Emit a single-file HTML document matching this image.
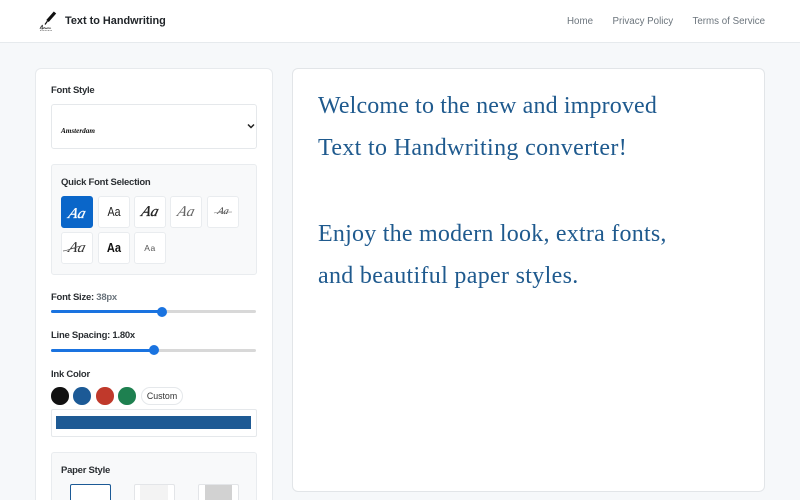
<!DOCTYPE html>
<html lang="en"><head><meta charset="utf-8"><title>Text to Handwriting</title>
<style>
html,body{margin:0;padding:0;width:800px;height:500px;overflow:hidden;background:#f6f8fa}
body{position:relative;font-family:"Liberation Sans",sans-serif;color:#212529}
.a{position:absolute;white-space:nowrap}
.box{position:absolute;box-sizing:border-box}
.lab{position:absolute;white-space:nowrap;font-size:9.5px;letter-spacing:-.25px;font-weight:700;line-height:14px;color:#2b2f33}
.nav{position:absolute;top:15px;white-space:nowrap;font-size:9.75px;line-height:14px;color:#6c757d}
.q{position:absolute;box-sizing:border-box;width:32px;height:32px;background:#fff;border:1px solid #e9ecef;border-radius:3px;text-align:center;overflow:hidden;color:#222}
.q span{position:absolute;left:0;right:0;top:0;line-height:30px}
.q svg{position:absolute;left:0;top:0}
.s{font-family:"Liberation Serif",serif;font-style:italic;font-size:15px;transform:skewX(-14deg)}
.h{font-family:"Liberation Sans",sans-serif}
.track{position:absolute;left:51px;width:205px;height:3px;background:#d8d8d8;border-radius:2px}
.fill{position:absolute;left:51px;height:3px;background:#1a73e0;border-radius:2px}
.th{position:absolute;width:10px;height:10px;border-radius:50%;background:#1a73e0}
.sw{position:absolute;top:387px;width:17.5px;height:17.5px;border-radius:50%}
.line{position:absolute;left:318px;white-space:nowrap;font-family:"Liberation Serif",serif;font-size:24px;line-height:42px;color:#1f5a8e}
</style></head><body>
<div class="box" style="left:0;top:0;width:800px;height:43px;background:#fff;border-bottom:1px solid #e6eaed"></div>
<svg class="a" style="left:38px;top:11px" width="20" height="22" viewBox="0 0 20 22">
<path d="M17 1.500 L9.500 10" stroke="#111" stroke-width="3.200" fill="none"/>
<path d="M9.500 10 L7 13.500" stroke="#111" stroke-width="1.200" fill="none"/>
<path d="M2 18c1-3 2-3 2.500-4c0 3-1 4-.5 4c1 0 2-2 3-1c1 1 2 0 3 0s2 .5 3 0" stroke="#444" stroke-width=".9" fill="none"/>
<path d="M2 19.500H14" stroke="#777" stroke-width=".8" stroke-dasharray="1 .6" fill="none"/>
</svg>
<div class="a" style="left:65px;top:14px;font-size:10.9px;font-weight:700;line-height:14px;color:#212529">Text to Handwriting</div>
<div class="nav" style="left:567px">Home</div>
<div class="nav" style="left:612.500px">Privacy Policy</div>
<div class="nav" style="left:692.500px">Terms of Service</div>

<div class="box" style="left:35px;top:68px;width:238px;height:432px;background:#fff;border:1px solid #e7eaed;border-bottom:none;border-radius:6px 6px 0 0"></div>
<div class="lab" style="left:51px;top:84px">Font Style</div>
<div class="box" style="left:51px;top:104px;width:206px;height:45px;background:#fff;border:1px solid #e5e8eb;border-radius:3px"></div>
<div class="a" style="left:61px;top:125px;font-family:'Liberation Serif',serif;font-style:italic;font-weight:700;font-size:7.200px;line-height:12px;color:#111">Amsterdam</div>
<svg class="a" style="left:247px;top:123px" width="8" height="7" viewBox="0 0 8 7"><path d="M1 1.500L4 4.500L7 1.500" fill="none" stroke="#222" stroke-width="1.500"/></svg>

<div class="box" style="left:51px;top:164px;width:206px;height:111px;background:#f8f9fa;border:1px solid #e9ecef;border-radius:3px"></div>
<div class="lab" style="left:61px;top:176px">Quick Font Selection</div>
<div class="q" style="left:61px;top:196px;background:#0a66c9;border-color:#0a66c9;color:#fff"><span class="s" style="font-size:15px;top:2px;-webkit-text-stroke:.3px #fff">Aa</span></div>
<div class="q" style="left:97.500px;top:196px"><span class="h" style="font-size:12.500px;transform:scaleX(.85)">Aa</span></div>
<div class="q" style="left:134px;top:196px"><span class="s" style="font-size:15px;-webkit-text-stroke:.3px #222">Aa</span></div>
<div class="q" style="left:170px;top:196px;color:#666"><span class="s" style="font-size:15px">Aa</span></div>
<div class="q" style="left:206.500px;top:196px;color:#444"><span class="s" style="font-size:10px">Aa</span><svg width="30" height="30"><path d="M6 16C10 15 18 15 24 15" stroke="#666" stroke-width=".6" fill="none"/></svg></div>
<div class="q" style="left:61px;top:232px;color:#333"><span class="s" style="font-size:15px">Aa</span><svg width="30" height="30"><path d="M1 18C8 17 13 14 19 13" stroke="#555" stroke-width=".7" fill="none"/></svg></div>
<div class="q" style="left:97.500px;top:232px"><span class="h" style="font-size:13px;font-weight:700;color:#111;transform:scaleX(.85)">Aa</span></div>
<div class="q" style="left:134px;top:232px;color:#555"><span class="h" style="font-size:8.500px;letter-spacing:.5px">Aa</span></div>

<div class="lab" style="left:51px;top:291px">Font Size: <span style="color:#6c757d">38px</span></div>
<div class="track" style="top:310px"></div><div class="fill" style="top:310px;width:111px"></div><div class="th" style="left:157px;top:306.500px"></div>
<div class="lab" style="left:51px;top:329px">Line Spacing: 1.80x</div>
<div class="track" style="top:348.500px"></div><div class="fill" style="top:348.500px;width:103px"></div><div class="th" style="left:149px;top:345px"></div>
<div class="lab" style="left:51px;top:368px">Ink Color</div>
<div class="sw" style="left:51px;background:#111"></div>
<div class="sw" style="left:73px;background:#1c5a96"></div>
<div class="sw" style="left:96px;background:#c0392b"></div>
<div class="sw" style="left:118px;background:#1e8050"></div>
<div class="box" style="left:141px;top:387px;width:42px;height:18px;background:#fff;border:1px solid #e5e8eb;border-radius:9px;font-size:8.800px;line-height:16px;text-align:center;color:#333">Custom</div>
<div class="box" style="left:51px;top:409px;width:206px;height:28px;background:#fff;border:1px solid #e5e8eb;border-radius:2px"></div>
<div class="box" style="left:56px;top:416px;width:195px;height:13px;background:#1e5a94"></div>
<div class="box" style="left:51px;top:452px;width:206px;height:48px;background:#f8f9fa;border:1px solid #e9ecef;border-bottom:none;border-radius:3px 3px 0 0"></div>
<div class="lab" style="left:61px;top:464px">Paper Style</div>
<div class="box" style="left:69.500px;top:484px;width:41px;height:16px;background:#fff;border:1.500px solid #1c5a96;border-bottom:none;border-radius:2px 2px 0 0"></div>
<div class="box" style="left:133.500px;top:484px;width:41px;height:16px;background:#fff;border:1px solid #e3e5e8;border-bottom:none;border-radius:2px 2px 0 0"></div>
<div class="box" style="left:140px;top:485px;width:28px;height:15px;background:#f3f3f3"></div>
<div class="box" style="left:197.500px;top:484px;width:41px;height:16px;background:#fff;border:1px solid #e3e5e8;border-bottom:none;border-radius:2px 2px 0 0"></div>
<div class="box" style="left:205px;top:485px;width:27px;height:15px;background:#d2d2d2"></div>

<div class="box" style="left:292px;top:68px;width:473px;height:424px;background:#fff;border:1px solid #e2e5e8;border-radius:6px"></div>
<div class="line" style="top:85px;letter-spacing:.14px">Welcome to the new and improved</div>
<div class="line" style="top:127px;letter-spacing:.34px">Text to Handwriting converter!</div>
<div class="line" style="top:213px;letter-spacing:.23px">Enjoy the modern look, extra fonts,</div>
<div class="line" style="top:255px;letter-spacing:.32px">and beautiful paper styles.</div>
</body></html>
